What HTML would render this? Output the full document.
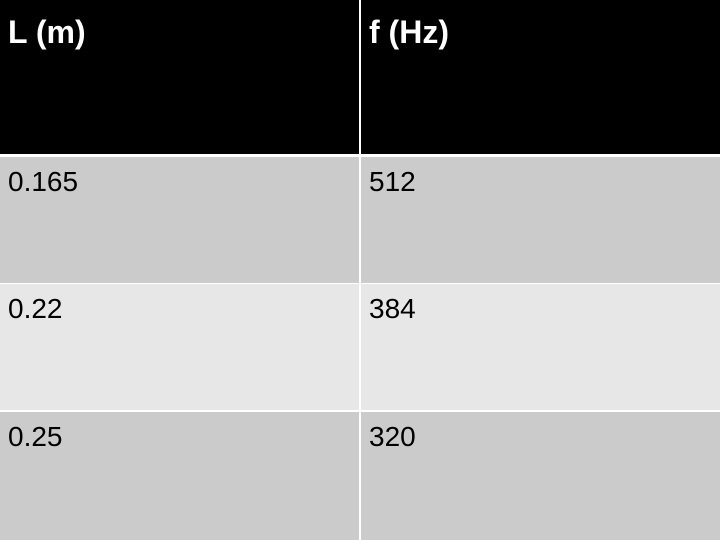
<!DOCTYPE html>
<html><head><meta charset="utf-8"><style>
body{margin:0;width:720px;height:540px;overflow:hidden;background:#fff;font-family:"Liberation Sans",sans-serif;position:relative}
.c{position:absolute;box-sizing:border-box;padding-left:8px;line-height:1}
.h{background:#000;color:#fff;font-weight:bold;font-size:32px;top:0;height:154px;padding-top:16px}
.d{font-size:28px;padding-top:11px}
</style></head><body>
<div class="c h" style="left:0;width:359px">L (m)</div>
<div class="c h" style="left:361px;width:359px">f (Hz)</div>
<div class="c d" style="left:0;top:157px;width:359px;height:126px;background:#cbcbcb">0.165</div>
<div class="c d" style="left:361px;top:157px;width:359px;height:126px;background:#cbcbcb">512</div>
<div class="c d" style="left:0;top:284px;width:359px;height:126px;background:#e7e7e7">0.22</div>
<div class="c d" style="left:361px;top:284px;width:359px;height:126px;background:#e7e7e7">384</div>
<div class="c d" style="left:0;top:412px;width:359px;height:128px;background:#cbcbcb">0.25</div>
<div class="c d" style="left:361px;top:412px;width:359px;height:128px;background:#cbcbcb">320</div>
</body></html>
